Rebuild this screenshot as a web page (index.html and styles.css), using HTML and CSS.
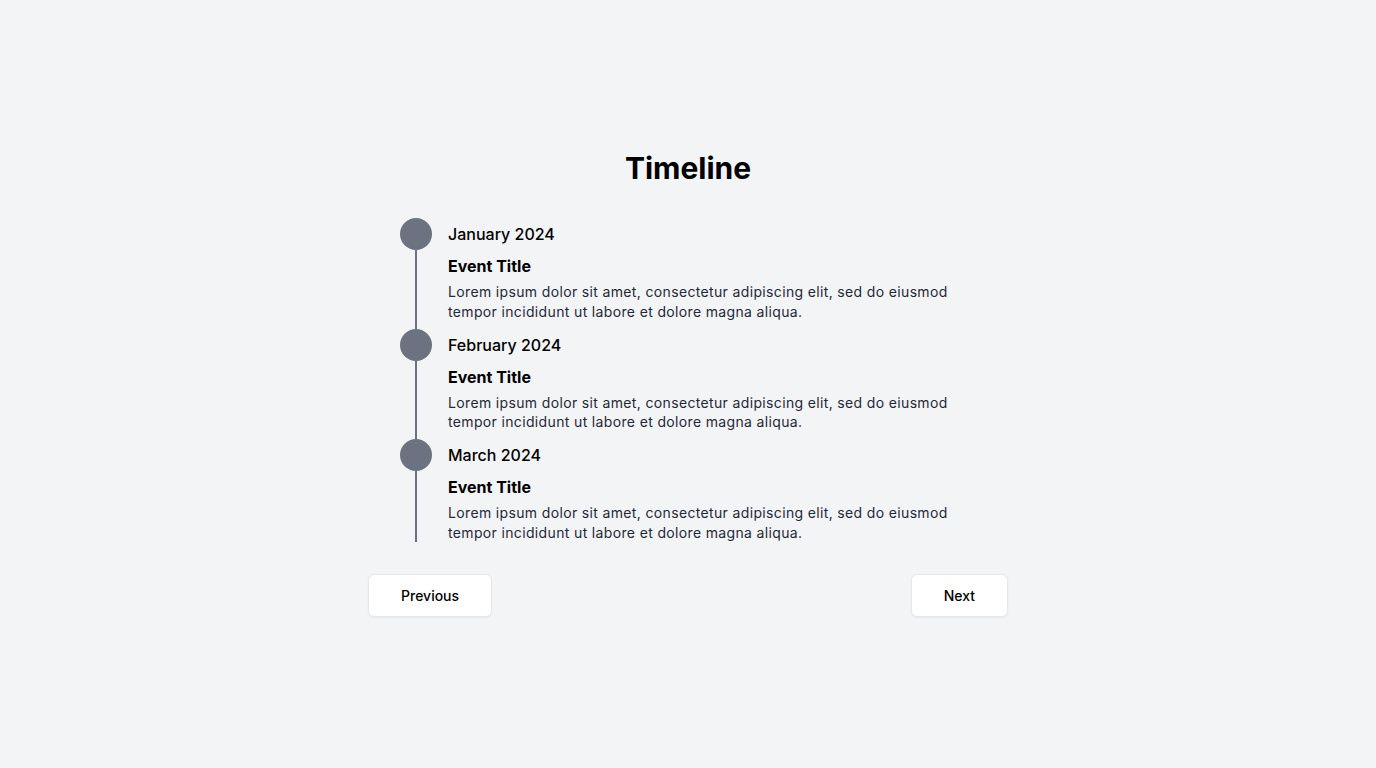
FILE: index.html
```html
<!DOCTYPE html>
<html lang="en">
<head>
<meta charset="utf-8">
<title>Timeline</title>
<link rel="stylesheet" href="styles.css">
</head>
<body>
<main class="page">
  <section class="card">
    <h1 class="title">Timeline</h1>
    <ol class="timeline">
      <li class="item">
        <span class="dot"></span>
        <div class="content">
          <div class="date">January 2024</div>
          <h2 class="event">Event Title</h2>
          <p class="desc">Lorem ipsum dolor sit amet, consectetur adipiscing elit, sed do eiusmod tempor incididunt ut labore et dolore magna aliqua.</p>
        </div>
      </li>
      <li class="item">
        <span class="dot"></span>
        <div class="content">
          <div class="date">February 2024</div>
          <h2 class="event">Event Title</h2>
          <p class="desc">Lorem ipsum dolor sit amet, consectetur adipiscing elit, sed do eiusmod tempor incididunt ut labore et dolore magna aliqua.</p>
        </div>
      </li>
      <li class="item">
        <span class="dot"></span>
        <div class="content">
          <div class="date">March 2024</div>
          <h2 class="event">Event Title</h2>
          <p class="desc">Lorem ipsum dolor sit amet, consectetur adipiscing elit, sed do eiusmod tempor incididunt ut labore et dolore magna aliqua.</p>
        </div>
      </li>
    </ol>
    <div class="nav">
      <button class="btn btn-prev">Previous</button>
      <button class="btn btn-next">Next</button>
    </div>
  </section>
</main>
</body>
</html>
```

FILE: styles.css
```css
* { box-sizing: border-box; }
html, body { margin: 0; padding: 0; }
body {
  background: #f3f4f6;
  font-family: Inter, "Noto Sans", sans-serif;
  color: #000;
}
.page {
  min-height: 767px;
  display: flex;
  justify-content: center;
  align-items: center;
}
.card {
  width: 640px;
}
.title {
  margin: 0 0 32px;
  text-align: center;
  font-size: 30px;
  line-height: 36px;
  font-weight: 700;
}
.timeline {
  list-style: none;
  margin: 0;
  padding: 0 32px;
}
.item {
  position: relative;
  display: flex;
  gap: 16px;
  padding-bottom: 8px;
}
.item:last-child { padding-bottom: 0; }
.item::before {
  content: "";
  position: absolute;
  left: 15px;
  top: 32px;
  bottom: 0;
  width: 2px;
  background: #6b7280;
}
.dot {
  flex: 0 0 32px;
  width: 32px;
  height: 32px;
  border-radius: 50%;
  background: #6b7280;
}
.content { flex: 1; min-width: 0; }
.date {
  font-size: 16px;
  line-height: 32px;
  font-weight: 500;
}
.event {
  margin: 4px 0 0;
  font-size: 16px;
  line-height: 24px;
  font-weight: 700;
}
.desc {
  margin: 4px 0 0;
  font-size: 14px;
  line-height: 19.25px;
  letter-spacing: 0.35px;
  color: #1f2937;
}
.nav {
  margin-top: 32px;
  display: flex;
  justify-content: space-between;
}
.btn {
  font-family: inherit;
  font-size: 14px;
  line-height: 21px;
  font-weight: 500;
  color: #000;
  background: #fff;
  border: 1px solid #e5e7eb;
  border-radius: 6px;
  padding: 10px 32px;
  box-shadow: 0 1px 2px rgba(0, 0, 0, 0.05);
  cursor: pointer;
}
```
